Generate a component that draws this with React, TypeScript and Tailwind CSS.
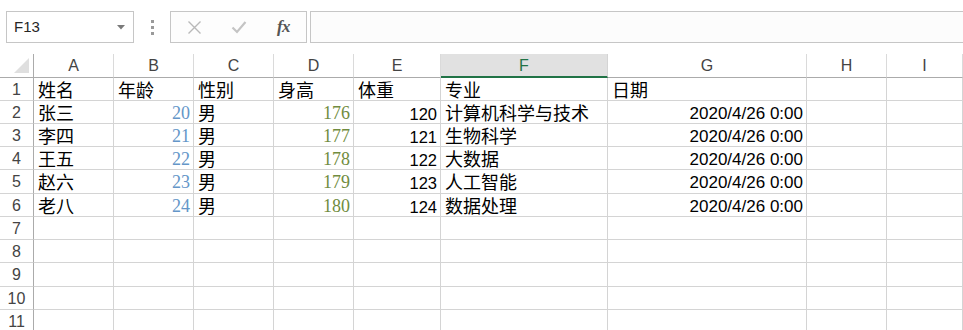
import React from "react";

type Col = { l: string; w: string };
const cols: Col[] = [
  { l: "A", w: "w-[80px]" },
  { l: "B", w: "w-[80px]" },
  { l: "C", w: "w-[80px]" },
  { l: "D", w: "w-[80px]" },
  { l: "E", w: "w-[87px]" },
  { l: "F", w: "w-[167px]" },
  { l: "G", w: "w-[199px]" },
  { l: "H", w: "w-[80px]" },
  { l: "I", w: "flex-1" },
];

type Kind = "cjk" | "serifB" | "serifD" | "num" | "empty";
type Cell = { t: string; k: Kind };

const cjk = (t: string): Cell => ({ t, k: "cjk" });
const e: Cell = { t: "", k: "empty" };

const people = [
  ["张三", "20", "176", "120", "计算机科学与技术"],
  ["李四", "21", "177", "121", "生物科学"],
  ["王五", "22", "178", "122", "大数据"],
  ["赵六", "23", "179", "123", "人工智能"],
  ["老八", "24", "180", "124", "数据处理"],
];

const rows: { h: string; cells: Cell[] }[] = [
  {
    h: "h-[23px]",
    cells: [cjk("姓名"), cjk("年龄"), cjk("性别"), cjk("身高"), cjk("体重"), cjk("专业"), cjk("日期"), e, e],
  },
  ...people.map((p, i) => ({
    h: i === 3 ? "h-[24px]" : "h-[23px]",
    cells: [
      cjk(p[0]),
      { t: p[1], k: "serifB" as Kind },
      cjk("男"),
      { t: p[2], k: "serifD" as Kind },
      { t: p[3], k: "num" as Kind },
      cjk(p[4]),
      { t: "2020/4/26 0:00", k: "num" as Kind },
      e,
      e,
    ],
  })),
  { h: "h-[23px]", cells: Array(9).fill(e) },
  { h: "h-[23px]", cells: Array(9).fill(e) },
  { h: "h-[24px]", cells: Array(9).fill(e) },
  { h: "h-[23px]", cells: Array(9).fill(e) },
  { h: "h-[23px]", cells: Array(9).fill(e) },
];

function CellText({ c, date }: { c: Cell; date?: boolean }) {
  if (c.k === "empty") return null;
  if (c.k === "cjk")
    return (
      <div className="pl-[4px] pt-[1px] leading-[20px] text-[18px] text-black whitespace-nowrap [font-family:'Noto_Sans_CJK_SC',sans-serif]">
        {c.t}
      </div>
    );
  if (c.k === "serifB")
    return (
      <div className="pr-[3px] pt-[2px] leading-[20px] text-[18px] text-right text-[#6496c8] [font-family:'Liberation_Serif',serif]">
        {c.t}
      </div>
    );
  if (c.k === "serifD")
    return (
      <div className="pr-[3px] pt-[2px] leading-[20px] text-[18px] text-right text-[#718c40] [font-family:'Liberation_Serif',serif]">
        {c.t}
      </div>
    );
  return (
    <div
      className={`pr-[3px] pt-[3px] leading-[20px] text-right text-black whitespace-nowrap [font-family:'Liberation_Sans',Arial,sans-serif] ${
        date ? "text-[17px]" : "text-[16.5px]"
      }`}
    >
      {c.t}
    </div>
  );
}

export default function App() {
  return (
    <div className="w-[963px] h-[330px] overflow-hidden bg-white [font-family:'Liberation_Sans',Arial,sans-serif]">
      {/* formula bar */}
      <div className="flex h-[54px] pt-[11px] items-start">
        <div className="ml-[6px] w-[128px] h-[32px] box-border border border-[#c6c6c6] bg-white flex items-center justify-between pl-[7px] pr-[8px]">
          <span className="text-[15px] text-[#262626]">F13</span>
          <svg width="8" height="5" viewBox="0 0 8 5">
            <path d="M0 0 L8 0 L4 4.5 Z" fill="#7a7a7a" />
          </svg>
        </div>
        <div className="w-[36px] h-[32px] flex flex-col items-center justify-center gap-[3px]">
          <span className="block w-[3px] h-[3px] bg-[#9a9a9a]" />
          <span className="block w-[3px] h-[3px] bg-[#9a9a9a]" />
          <span className="block w-[3px] h-[3px] bg-[#9a9a9a]" />
        </div>
        <div className="w-[137px] h-[32px] box-border border border-[#c6c6c6] bg-[#fdfdfd] flex items-center">
          <div className="w-[45px] flex justify-center pl-[1px]">
            <svg width="15" height="15" viewBox="0 0 15 15">
              <path d="M1.5 1.5 L13.5 13.5 M13.5 1.5 L1.5 13.5" stroke="#b9b9b9" strokeWidth="1.4" />
            </svg>
          </div>
          <div className="w-[45px] flex justify-center">
            <svg width="16" height="14" viewBox="0 0 16 14">
              <path d="M1.5 7.5 L6 12 L14.5 2" stroke="#c4c4c4" strokeWidth="2.2" fill="none" />
            </svg>
          </div>
          <div className="w-[45px] flex justify-center">
            <span className="italic font-bold text-[17px] text-[#555] [font-family:'Liberation_Serif',serif] tracking-[-0.5px]">
              fx
            </span>
          </div>
        </div>
        <div className="ml-[3px] flex-1 h-[32px] box-border border border-r-0 border-[#c6c6c6] bg-[#fcfcfc]" />
      </div>

      {/* column header row */}
      <div className="flex h-[24px]">
        <div className="w-[34px] box-border border-r border-b border-[#ababab] flex items-end justify-end pr-[3px] pb-[3px]">
          <svg width="16" height="16" viewBox="0 0 16 16">
            <path d="M15 0 L15 15 L0 15 Z" fill="#dfdfdf" />
          </svg>
        </div>
        {cols.map((c) =>
          c.l === "F" ? (
            <div
              key={c.l}
              className={`${c.w} box-border border-r border-r-[#d4d4d4] border-b-2 border-b-[#217346] bg-[#e1e1e1] text-center text-[16px] text-[#217346] leading-[20px] pt-[2px]`}
            >
              {c.l}
            </div>
          ) : (
            <div
              key={c.l}
              className={`${c.w} box-border border-r border-r-[#dadada] border-b border-b-[#ababab] text-center text-[16px] text-[#444] leading-[20px] pt-[2px]`}
            >
              {c.l}
            </div>
          )
        )}
      </div>

      {/* rows */}
      {rows.map((r, i) => (
        <div key={i} className={`flex ${r.h}`}>
          <div className="w-[34px] box-border border-r border-r-[#ababab] border-b border-b-[#d4d4d4] text-center text-[16px] text-[#444] leading-[20px] pt-[2px]">
            {i + 1}
          </div>
          {cols.map((c, j) => (
            <div key={c.l} className={`${c.w} box-border border-r border-b border-[#d4d4d4] overflow-visible`}>
              <CellText c={r.cells[j]} date={j === 6} />
            </div>
          ))}
        </div>
      ))}
    </div>
  );
}
